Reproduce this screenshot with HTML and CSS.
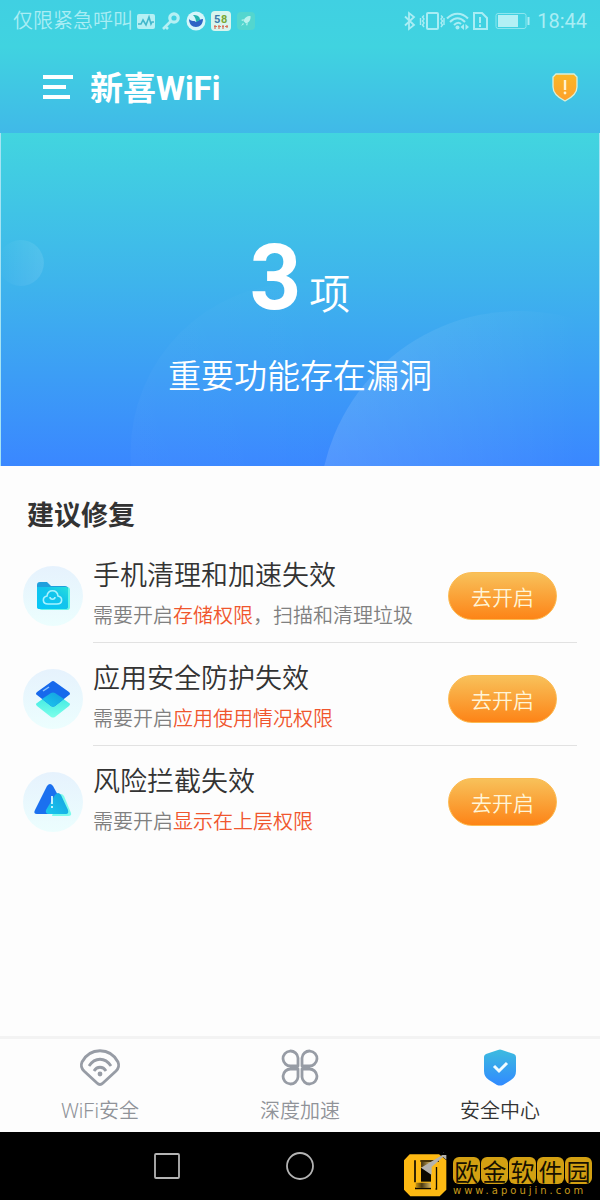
FILE: index.html
```html
<!DOCTYPE html>
<html lang="zh-CN">
<head>
<meta charset="utf-8">
<meta name="viewport" content="width=device-width, initial-scale=1">
<title>新喜WiFi</title>
<link rel="stylesheet" href="styles.css">
</head>
<body>
<header class="top">
  <div class="status">
    <div class="status-group">
      <span>仅限紧急呼叫</span>
      <svg class="status-icon gap-s" width="20" height="20" viewBox="0 0 20 20"><rect x="1" y="3" width="18" height="15" rx="2" fill="#b5f0f4"/><path d="M2 13h3l2-4 3 5 3-8 2 7 1-2h2" fill="none" stroke="#42b8cc" stroke-width="1.600"/></svg>
      <svg class="status-icon" width="20" height="20" viewBox="0 0 20 20"><circle cx="13" cy="7" r="4.200" fill="none" stroke="#b5f0f4" stroke-width="3.200"/><path d="M10 10 2 18M4 15l3 3" fill="none" stroke="#b5f0f4" stroke-width="2.600"/></svg>
      <svg class="status-icon" width="20" height="20" viewBox="0 0 20 20"><circle cx="10" cy="10" r="9.500" fill="#d6f6fa"/><path d="M3 8c3 3 5 1 7 3 2-2 5-3 7-3 0 5-3 8-7 8-4 0-7-3-7-8z" fill="#2e63c4"/><path d="M7 4c4 0 7 1 7 5l-4 2c0-3-1-5-3-7z" fill="#23b5b0"/></svg>
      <svg class="status-icon" width="20" height="20" viewBox="0 0 20 20"><rect width="20" height="20" rx="4" fill="#d9f5ee"/><text class="app-num" x="3" y="12" fill="#3c78aa">5</text><text class="app-num" x="10" y="12" fill="#79a835">8</text><path d="M3 15.500h3m1 0h3m1 0h2m1 0h3M4 14v4m4-4v4m4-4v4m4-4v3" stroke="#d8745c" stroke-width="1.200"/></svg>
      <svg class="status-icon" width="20" height="20" viewBox="0 0 20 20"><rect x="1" y="1" width="18" height="18" rx="4" fill="#53d6cf"/><path d="M14.500 5c-4 0-6 2-7 5l2.500 2.500c3-1 5-3.500 4.500-7.500zM8 8l-3 1 2 1zM12 12l-1 3-1-2zM7 12l-2 3 3-2z" fill="#b9f3ee"/></svg>
    </div>
    <div class="status-group tight">
      <svg class="status-icon" width="16" height="20" viewBox="0 0 16 20"><path d="M3 5.500 12 14l-5 4V2l5 4-9 8.500" fill="none" stroke="#a9edf4" stroke-width="1.800"/></svg>
      <svg class="status-icon" width="26" height="20" viewBox="0 0 26 20"><rect x="8" y="2" width="11" height="16" rx="1" fill="none" stroke="#a9edf4" stroke-width="2"/><path d="M5 4.500 3.500 6 5 8 3.500 10 5 12l-1.500 2L5 16M1.500 7v7M22 4.500 23.500 6 22 8l1.500 2-1.500 2 1.500 2-1.500 2M25 7v7" fill="none" stroke="#a9edf4" stroke-width="1.400"/></svg>
      <svg class="status-icon" width="24" height="20" viewBox="0 0 24 20"><path d="M1 7.500C7 1 16 1 22 7.500M4 11c5-5 10-5 15 0M8 14c3-3 5-3 7-1" fill="none" stroke="#a9edf4" stroke-width="2"/><circle cx="11.500" cy="16.500" r="2" fill="#a9edf4"/><path d="m18 13-3.500 3 3.500 3zM19.500 13v6l3.500-3z" fill="#a9edf4"/></svg>
      <svg class="status-icon gap-e" width="18" height="20" viewBox="0 0 18 20"><path d="M3 2h8l5 5v11H3z" fill="none" stroke="#a9edf4" stroke-width="2"/><path d="M9 6v6m0 1.500V16" stroke="#a9edf4" stroke-width="2"/></svg>
      <svg class="status-icon gap-e" width="36" height="20" viewBox="0 0 36 20"><rect x="1" y="2.500" width="30" height="15" rx="2" fill="none" stroke="#8be6ef"/><rect x="3" y="4" width="20" height="12" fill="#b2f0f5"/><path d="M33.500 6v8" stroke="#a9edf4" stroke-width="2"/></svg>
      <span>18:44</span>
    </div>
  </div>
  <div class="bar">
    <button class="icon-button" aria-label="菜单"><svg width="32" height="28" viewBox="0 0 32 28"><path d="M1 4h30M1 14h23M1 24h27" stroke="#fff" stroke-width="4"/></svg></button>
    <h1 class="title">新喜WiFi</h1>
    <button class="icon-button" aria-label="安全提示"><svg width="28" height="30" viewBox="0 0 28 30"><defs><linearGradient id="warn" x2="0" y2="1"><stop stop-color="#f9b726"/><stop offset="1" stop-color="#ffa02c"/></linearGradient></defs><path d="M5 2h18l3 3v10c0 7-6 11-12 14C8 26 2 22 2 15V5z" fill="url(#warn)" stroke="#d9f1da" stroke-width="1.300"/><path d="M14 8v10" stroke="#fff2cf" stroke-width="2.400"/><circle cx="14" cy="21" r="1.400" fill="#fff2cf"/></svg></button>
  </div>
</header>
<main class="main">
  <section class="hero">
    <svg class="hero-art" viewBox="0 0 600 333" preserveAspectRatio="none" aria-hidden="true"><defs><linearGradient id="orb"><stop stop-color="#fff" stop-opacity=".13"/><stop offset=".65" stop-color="#fff" stop-opacity="0"/></linearGradient><linearGradient id="dot"><stop stop-color="#fff" stop-opacity="0"/><stop offset="1" stop-color="#fff" stop-opacity=".1"/></linearGradient></defs><circle cx="520" cy="379" r="201" fill="url(#orb)"/><circle cx="300" cy="320" r="170" fill="url(#orb)" opacity=".2"/><circle cx="20" cy="130" r="23" fill="url(#dot)"/></svg>
    <p class="count"><strong class="number">3</strong><span class="unit">项</span></p>
    <p class="message">重要功能存在漏洞</p>
  </section>
  <section class="fixes">
    <h2 class="heading">建议修复</h2>
    <ul class="list">
      <li class="row">
        <svg class="row-icon" width="60" height="60" viewBox="0 0 60 60"><defs><linearGradient id="disc" x2="0" y2="1"><stop stop-color="#e6f2fd"/><stop offset="1" stop-color="#ecfefe"/></linearGradient><linearGradient id="folder" x1="0" y1="1" x2="1" y2="0"><stop stop-color="#07c7f8"/><stop offset=".6" stop-color="#12c4ec"/><stop offset="1" stop-color="#25dfdc"/></linearGradient></defs><circle cx="30" cy="30" r="30" fill="url(#disc)"/><path d="M17 21h27q3 0 3 3v17q0 3-3 3H19q-3 0-3-3z" fill="#65f5e7"/><path d="M14 19q0-3 3-3h7l4 4h14q3 0 3 3v17q0 3-3 3H17q-3 0-3-3z" fill="#1f9fdd"/><path d="M14 21h29q2 0 2 2v17q0 3-3 3H16q-2 0-2-2z" fill="url(#folder)"/><path d="M25 38c-6 0-6-7-1-8 1-7 10-7 11 0 5 1 5 8-1 8zM27 31c0 3 5 3 5 0" fill="none" stroke="#a8f2ff" stroke-width="1.600"/></svg>
        <div class="row-body">
          <div class="row-text"><h3 class="row-title">手机清理和加速失效</h3><p class="row-desc">需要开启<em class="mark">存储权限</em>，扫描和清理垃圾</p></div>
          <button class="enable">去开启</button>
        </div>
      </li>
      <li class="row">
        <svg class="row-icon" width="60" height="60" viewBox="0 0 60 60"><defs><linearGradient id="low" x2="0" y2="1"><stop stop-color="#35e5e3"/><stop offset="1" stop-color="#7cffe9"/></linearGradient><linearGradient id="mid" x1="1" x2="0" y2="1"><stop stop-color="#149fe0"/><stop offset="1" stop-color="#1bc8ee"/></linearGradient></defs><circle cx="30" cy="30" r="30" fill="url(#disc)"/><path d="m28 24-14 10q-2 1 0 3l14 11q2 1 4 0l14-11q2-2 0-3L32 24q-2-1-4 0z" fill="url(#low)"/><path d="m28 13-14 10q-2 2 0 3l14 11q2 1 4 0l14-11q2-1 0-3L32 13q-2-2-4 0z" fill="#1769ec"/><path d="m28 24-9 6 9 7q2 1 4 0l9-7-9-6q-2-1-4 0z" fill="url(#mid)"/><path d="m20 22 6-4" stroke="#8bc6ff" stroke-width="1.500"/></svg>
        <div class="row-body">
          <div class="row-text"><h3 class="row-title">应用安全防护失效</h3><p class="row-desc">需要开启<em class="mark">应用使用情况权限</em></p></div>
          <button class="enable">去开启</button>
        </div>
      </li>
      <li class="row">
        <svg class="row-icon" width="60" height="60" viewBox="0 0 60 60"><circle cx="30" cy="30" r="30" fill="url(#disc)"/><path d="M35 24q3-4 6 0l7 17q1 3-3 3H29z" fill="#7bfbec"/><path d="M24 14q3-4 6 0l13 24q2 4-2 4H14q-4 0-2-4z" fill="#1b70ef"/><path d="M32 23q3-4 6 0l7 15q1 4-2 4H26q-4 0-3-4z" fill="url(#mid)"/><path d="M29 24v8m0 2v2" stroke="#d8faff" stroke-width="1.800"/></svg>
        <div class="row-body">
          <div class="row-text"><h3 class="row-title">风险拦截失效</h3><p class="row-desc">需要开启<em class="mark">显示在上层权限</em></p></div>
          <button class="enable">去开启</button>
        </div>
      </li>
    </ul>
  </section>
</main>
<nav class="tabs">
  <a class="tab" href="#wifi"><svg width="44" height="40" viewBox="0 0 44 40"><path d="M4 14C12-1 32-1 40 14q2 5-2 9L25 35q-3 3-6 0L6 23q-4-4-2-9z" fill="none" stroke="#979ca5" stroke-width="2.800"/><path d="M11 18c6-9 16-9 22 0M16 23c3-5 9-5 12 0" fill="none" stroke="#979ca5" stroke-width="2.800"/><circle cx="22" cy="26" r="2.400" fill="#979ca5"/></svg><span>WiFi安全</span></a>
  <a class="tab" href="#boost"><svg width="44" height="40" viewBox="0 0 44 40"><path d="M20 18h-7a7.500 7.500 0 1 1 7-8zM24 18h7a7.500 7.500 0 1 0-7-8zM20 21h-7a7.500 7.500 0 1 0 7 8zM24 21h7a7.500 7.500 0 1 1-7 8z" fill="none" stroke="#979ca5" stroke-width="2.800" stroke-linejoin="round"/></svg><span>深度加速</span></a>
  <a class="tab active" href="#security" aria-current="page"><svg width="44" height="40" viewBox="0 0 44 40"><defs><linearGradient id="shield" x2="0" y2="1"><stop stop-color="#3dbbdf"/><stop offset="1" stop-color="#318aff"/></linearGradient></defs><path d="M20 2q2-1 4 0l12 4q2 1 2 3v14q0 6-5 9l-8 5q-3 1-6 0l-8-5q-5-3-5-9V9q0-2 2-3z" fill="url(#shield)"/><path d="m16 18 5 5 8-8" fill="none" stroke="#f1fcff" stroke-width="3"/></svg><span>安全中心</span></a>
</nav>
<footer class="system">
  <button class="icon-button" aria-label="最近任务"><svg width="28" height="28" viewBox="0 0 28 28"><rect x="2" y="2" width="24" height="24" rx="1" fill="none" stroke="#b4b4b4" stroke-width="1.800"/></svg></button>
  <button class="icon-button" aria-label="主屏幕"><svg width="28" height="28" viewBox="0 0 28 28"><circle cx="14" cy="14" r="13" fill="none" stroke="#b4b4b4" stroke-width="1.800"/></svg></button>
  <button class="icon-button" aria-label="返回"><svg width="28" height="28" viewBox="0 0 28 28"><path d="M24 2v24L3 14z" fill="none" stroke="#b4b4b4" stroke-width="1.800"/></svg></button>
  <div class="brand">
    <svg width="44" height="44" viewBox="0 0 132 132"><defs><linearGradient id="metal"><stop stop-color="#c99410"/><stop offset=".4" stop-color="#4b3a12"/><stop offset="1" stop-color="#d8b868"/></linearGradient></defs><path d="M20 4h88l22 18v88l-20 20H22L3 110V22z" fill="#fdb913"/><path d="M36 22v66M52 24h56M100 42v68M36 106h48" fill="none" stroke="#0c0900" stroke-width="5"/><path d="M54 44h30v42H54z" fill="#0c0900"/><path d="M54 27h30v15H54zM38 89h46v15H38z" fill="url(#metal)"/><path d="m54 44 64-38h12v14L120 12 90 38l-4 28z" fill="#b4b2ac"/><path d="M86 40h12v66H86z" fill="#fdb913"/></svg>
    <div class="brand-text">
      <div class="seals"><span class="seal">欧</span><span class="seal">金</span><span class="seal">软</span><span class="seal">件</span><span class="seal">园</span></div>
      <span class="site">www.apoujin.com</span>
    </div>
  </div>
</footer>
</body>
</html>
```
FILE: styles.css
```css
* { box-sizing: border-box; }
body {
  margin: 0;
  min-height: 100vh;
  display: flex;
  flex-direction: column;
  background: #fdfdfd;
  color: #333;
  font-family: Roboto, "Noto Sans CJK SC", sans-serif;
}
h1, h2, h3, p, ul { margin: 0; padding: 0; }
svg { display: block; flex: none; }
button { border: 0; padding: 0; font: inherit; cursor: pointer; }
.icon-button { background: none; }

.top { background: linear-gradient(#40d0e2, #40d3e0 35%, #40b9e8); }
.status {
  display: flex;
  justify-content: space-between;
  align-items: center;
  height: 41px;
  padding: 0 13px;
  font-size: 20px;
  font-weight: 350;
  line-height: 24px;
  color: #a9edf4;
}
.status-group { display: flex; align-items: center; gap: 5px; }
.status-group.tight { gap: 1px; font-weight: 400; }
.gap-s { margin-left: -2px; }
.gap-e { margin-right: 5px; }
.app-num { font: bold 11px Roboto, sans-serif; }
.bar {
  display: flex;
  align-items: center;
  height: 92px;
  padding: 0 21px 0 42px;
}
.title {
  flex: 1;
  margin-left: 16px;
  padding-top: 4px;
  font-size: 33px;
  line-height: 40px;
  font-weight: 700;
  color: #fff;
}

.main { flex: 1; }
.hero {
  position: relative;
  height: 333px;
  padding-top: 98px;
  border: solid #a5e3f3;
  border-width: 0 1px;
  background: linear-gradient(#42d5df, #3eb4ec 45%, #3a87ff);
  text-align: center;
  color: #fff;
}
.hero-art { position: absolute; inset: 0; width: 100%; height: 100%; }
.count {
  position: relative;
  display: flex;
  justify-content: center;
  align-items: baseline;
  gap: 8px;
  line-height: 96px;
}
.number { font-size: 90px; }
.unit { font-size: 41px; font-weight: 350; }
.message {
  position: relative;
  margin-top: 10px;
  font-size: 33px;
  font-weight: 350;
  line-height: 48px;
}

.fixes { padding: 30px 23px 0; }
.heading { margin-left: 4px; font-size: 27px; line-height: 40px; }
.list { list-style: none; margin-top: 4px; }
.row { display: flex; align-items: center; gap: 10px; }
.row-body {
  flex: 1;
  display: flex;
  align-items: center;
  justify-content: space-between;
  height: 103px;
  padding-right: 20px;
  border-bottom: 1px solid #e2e2e2;
}
.row:last-child .row-body { border-color: transparent; }
.row-icon { margin-top: 8px; }
.row-title { font-size: 27px; font-weight: 350; line-height: 40px; margin-top: 4px; }
.row-desc { font-size: 20px; font-weight: 350; line-height: 28px; margin-top: 6px; color: #808080; white-space: nowrap; }
.row-text { width: 0; white-space: nowrap; }
.mark { font-style: normal; color: #f0562e; }
.enable {
  width: 109px;
  height: 48px;
  margin-top: 10px;
  border: 1px solid #fcbb52;
  border-radius: 24px;
  background: linear-gradient(#f8c15a, #fd8417);
  color: #fff5d8;
  font-size: 21px;
  font-weight: 350;
}

.tabs {
  display: flex;
  height: 96px;
  border-top: 3px solid #f3f3f3;
}
.tab {
  flex: 1;
  display: flex;
  flex-direction: column;
  align-items: center;
  padding-top: 9px;
  gap: 9px;
  font-size: 20px;
  font-weight: 350;
  line-height: 28px;
  color: #909399;
  text-decoration: none;
}
.tab.active { color: #333; }

.system {
  position: relative;
  display: flex;
  justify-content: center;
  align-items: center;
  gap: 105px;
  height: 68px;
  background: #000;
}
.brand {
  position: absolute;
  right: 8px;
  bottom: 3px;
  display: flex;
  gap: 6px;
  padding-left: 4px;
  background: #000;
}
.brand-text { display: flex; flex-direction: column; padding-top: 4px; }
.seals { display: flex; gap: 1px; }
.seal {
  width: 27px;
  border-radius: 6px;
  background: #d3a012;
  color: #171000;
  font: 24px/27px "Noto Sans CJK SC", sans-serif;
  text-align: center;
}
.site {
  font: 10px/13px "DejaVu Sans", sans-serif;
  letter-spacing: 3px;
  color: #c79a1c;
}
```
